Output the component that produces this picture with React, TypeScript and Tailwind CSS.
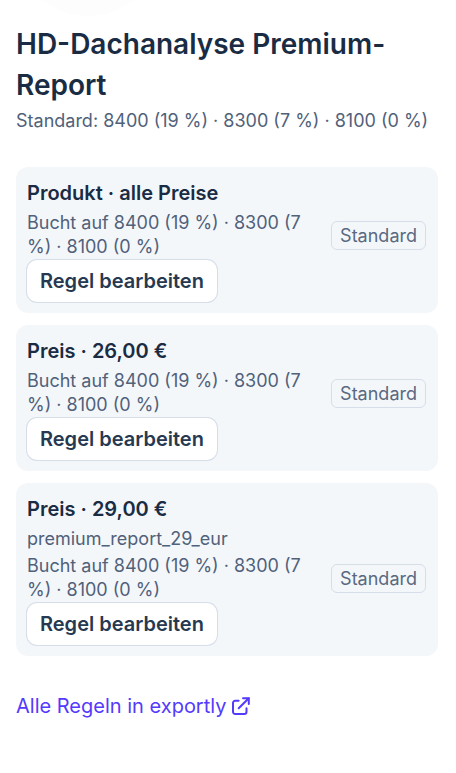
import React from 'react';

interface PriceRule {
    title: string;
    code?: string;
    accounts: string;
}

const ACCOUNTS = '8400 (19 %) · 8300 (7 %) · 8100 (0 %)';

const RULES: PriceRule[] = [
    { title: 'Produkt · alle Preise', accounts: ACCOUNTS },
    { title: 'Preis · 26,00 €', accounts: ACCOUNTS },
    { title: 'Preis · 29,00 €', code: 'premium_report_29_eur', accounts: ACCOUNTS },
];

function ExternalIcon() {
    return (
        <svg className="w-5 h-5 shrink-0" viewBox="0 0 20 20" fill="none" stroke="currentColor" strokeWidth="2" strokeLinecap="round" strokeLinejoin="miter" aria-hidden="true">
            <path d="M7.6 4.7H4.2A2.2 2.2 0 0 0 2 6.9V15.8A2.2 2.2 0 0 0 4.2 18H13.300A2.200 2.200 0 0 0 15.500 15.800V12.200" />
            <path d="M12 2.200H17.800V8" />
            <path d="M17.500 2.500L7.700 12.300" />
        </svg>
    );
}

function RuleCard({ rule }: { rule: PriceRule }) {
    return (
        <li className="rounded-xl bg-[#f4f7fa] pt-3 pr-3 pb-[11px] pl-[11px]">
            <h3 className="text-xl leading-7 font-semibold text-[#1a2c44]">{rule.title}</h3>
            {rule.code && <p className="mt-1 -mb-px text-lg leading-6 text-[#50617a]">{rule.code}</p>}
            <div className="mt-1 flex items-center gap-6">
                <p className="flex-1 min-w-0 text-lg leading-6 text-[#50617a]">{`Bucht auf ${rule.accounts}`}</p>
                <span className="shrink-0 rounded-md border border-[#d5dee9] px-2 text-lg leading-[27px] text-[#596981]">Standard</span>
            </div>
            <button type="button" className="mt-px block h-[42px] px-[13px] rounded-[10px] ring-1 ring-[#d5dee9] bg-white text-xl leading-7 font-semibold text-[#273951]">
                Regel bearbeiten
            </button>
        </li>
    );
}

export default function App() {
    return (
        <main className="relative overflow-hidden min-h-screen bg-white px-4 pt-6 pb-12 font-['Inter',sans-serif]">
            <div className="absolute left-4 -top-32 w-36 h-36 rounded-full bg-[#fdfdfd]" />

            <header className="relative">
                <h2 className="text-[28px] leading-[41px] font-semibold text-[#1a2c44]">HD-Dachanalyse Premium-Report</h2>
                <p className="mt-[3px] text-lg leading-6 text-[#50617a]">{`Standard: ${ACCOUNTS}`}</p>
            </header>

            <ul className="mt-[34px] mr-0.5 space-y-3">
                {RULES.map((rule) => (
                    <RuleCard key={rule.title} rule={rule} />
                ))}
            </ul>

            <a href="#regeln" className="mt-9 inline-flex items-center gap-[5px] text-xl leading-7 text-[#533afd]">
                Alle Regeln in exportly
                <ExternalIcon />
            </a>
        </main>
    );
}
